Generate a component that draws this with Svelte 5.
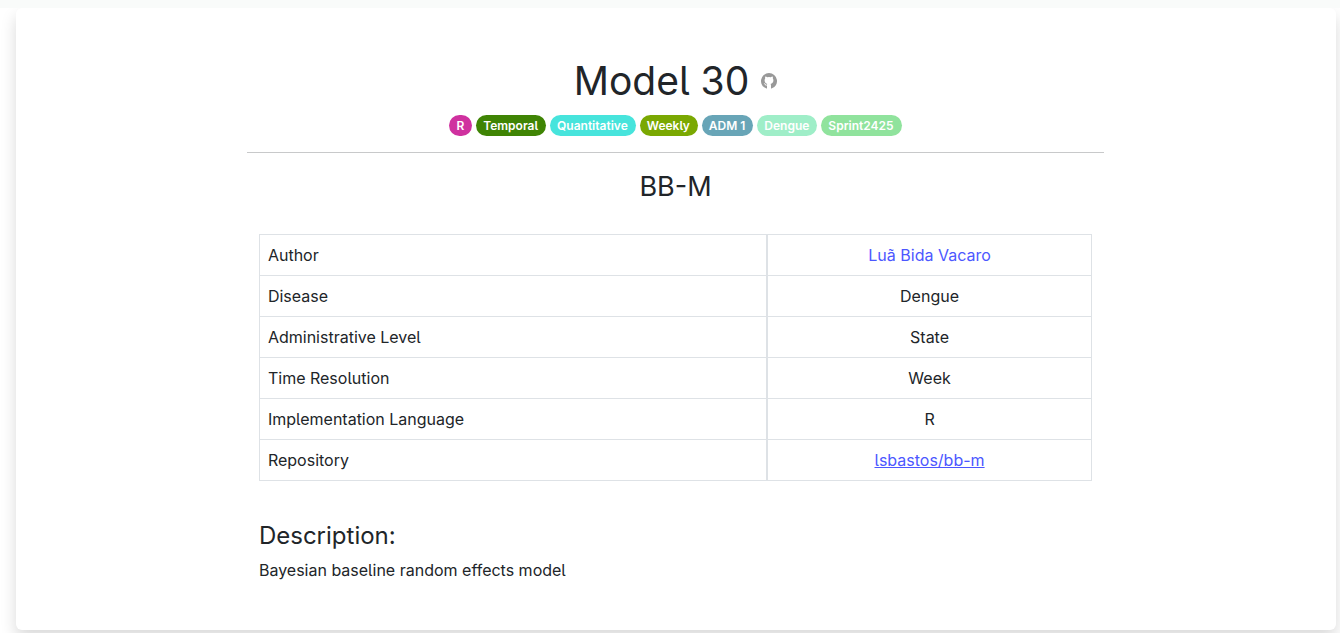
<script>
  const tags = [
    { name: 'R', color: '#cf319f' },
    { name: 'Temporal', color: '#3f8404' },
    { name: 'Quantitative', color: '#47e4dc' },
    { name: 'Weekly', color: '#7aa802' },
    { name: 'ADM 1', color: '#68a5b7' },
    { name: 'Dengue', color: '#9feec8' },
    { name: 'Sprint2425', color: '#90e39d' }
  ];
  const rows = [
    { label: 'Author', value: 'Luã Bida Vacaro', href: '#author', plain: true },
    { label: 'Disease', value: 'Dengue' },
    { label: 'Administrative Level', value: 'State' },
    { label: 'Time Resolution', value: 'Week' },
    { label: 'Implementation Language', value: 'R' },
    { label: 'Repository', value: 'lsbastos/bb-m', href: '#repository' }
  ];
</script>

<div class="page">
  <main class="card">
    <div class="content">
      <header>
        <h1>
          Model 30
          <a class="github" href="#github" aria-label="GitHub">
            <svg viewBox="0 0 16 16" width="16" height="16">
              <path fill="currentColor" d="M8 0a8 8 0 0 0-2.5 15.6c.4.1.5-.2.5-.4v-2.7c-1.5.1-2-.5-2.4-1.300-.2-.4-.5-.8-.9-1.1.8-.1 1.2.4 1.6 1 .5.7 1.1.8 1.8.6v-1C4.800 10.700 3.600 9.500 3.600 7.300c0-.8.2-1.400.6-1.900-.2-.6-.1-1.400.1-2 .8 0 1.500.5 2 .8a9 9 0 0 1 3.400 0c.5-.3 1.200-.8 2-.8.2.6.3 1.400.1 2 .4.5.6 1.100.6 1.900 0 2.200-1.200 3.400-2.900 3.700.3.3.5.8.5 1.400v2.800c0 .2.1.5.5.4A8 8 0 0 0 8 0z" />
            </svg>
          </a>
        </h1>
        <div class="tags">
          {#each tags as tag}<span class="tag" style="background: {tag.color}">{tag.name}</span>{/each}
        </div>
      </header>
      <h2>BB-M</h2>
      <div class="details">
        <table>
          <tbody>
            {#each rows as row}
              <tr>
                <th scope="row">{row.label}</th>
                <td>{#if row.href}<a href={row.href} class:plain={row.plain}>{row.value}</a>{:else}{row.value}{/if}</td>
              </tr>
            {/each}
          </tbody>
        </table>
        <h3>Description:</h3>
        <p>Bayesian baseline random effects model</p>
      </div>
    </div>
  </main>
</div>

<style>
  :global(body) { background: #f9fbfa; }
  * { box-sizing: border-box; }
  .page {
    margin-top: 8px;
    padding: 0 4px 3px 16px;
    background: #fff;
    overflow: hidden;
  }
  .card {
    padding: 49px 17px 48px 16px;
    background: #fff;
    border-radius: 6px;
    box-shadow: 0 8px 16px rgba(0, 0, 0, 0.15);
    color: #212529;
    font: 16px/24px Inter, sans-serif;
    font-feature-settings: "cv05";
  }
  .content { width: 66.6%; margin: 0 auto; }
  header { border-bottom: 1px solid #c8c9ca; padding-bottom: 16px; text-align: center; }
  h1, h2, h3, p { margin: 0; font-weight: 400; }
  h1 { font-size: 39px; line-height: 48px; display: flex; justify-content: center; align-items: center; gap: 12px; }
  .github { color: #999; display: flex; }
  .tags { display: flex; flex-wrap: wrap; justify-content: center; gap: 4px; margin-top: 10px; }
  .tag { padding: 0 8px 0 7px; border-radius: 12px; font-size: 12px; line-height: 21px; font-weight: 600; color: #fff; }
  h2 { font-size: 27px; line-height: 34px; margin-top: 17px; text-align: center; }
  .details { padding: 30px 12px 0; }
  table { width: 100%; table-layout: fixed; border-collapse: collapse; }
  th, td { height: 41px; padding: 8px; border: 1px solid #dee2e6; font-weight: 400; }
  th { width: 61%; text-align: left; border-right-width: 2px; }
  td { text-align: center; }
  a { color: #4c57ff; }
  .plain { text-decoration: none; }
  h3 { font-size: 24px; line-height: 29px; margin-top: 40px; }
  p { margin-top: 8px; }
</style>
